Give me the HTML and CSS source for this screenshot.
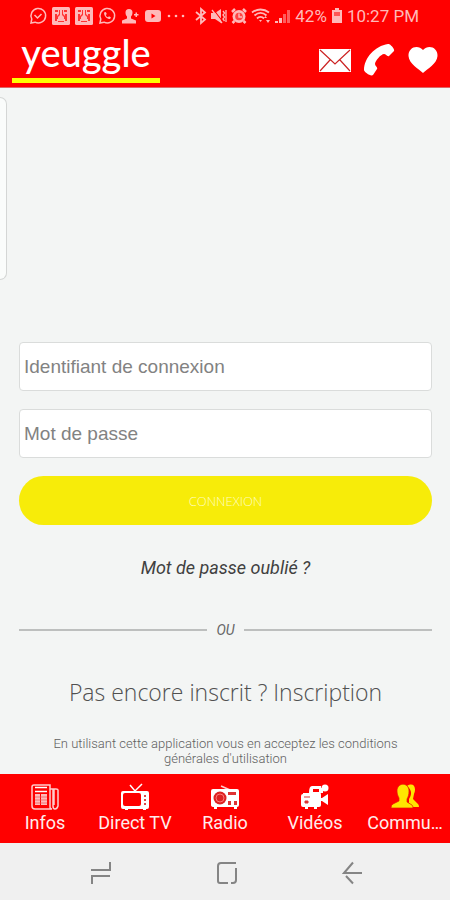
FILE: index.html
```html
<!DOCTYPE html>
<html lang="fr">
<head>
<meta charset="utf-8">
<meta name="viewport" content="width=device-width, initial-scale=1">
<title>Yeuggle</title>
<link rel="stylesheet" href="styles.css">
</head>
<body>
<div class="app">
  <header class="header">
    <div class="status">
      <div class="notices">
        <svg width="18" height="18" viewBox="0 0 18 18" fill="none" stroke="currentColor" stroke-width="1.5"><path d="M2 16l.8-4A7.3 7.3 0 1 1 6 15.200z"/><path d="M5.500 8l3 3 4-4"/></svg>
        <svg width="18" height="18" viewBox="0 0 18 18"><rect width="18" height="18" rx="1.500" fill="currentColor"/><path d="M3 3h3v2H3zM12 3h3v2h-3zM3 7h2v7H3zM13 7h2v7h-2zM7 3h1v5L6 10v2H5V9l2-2zM11 3h-1v5l2 2v2h1V9l-2-2zM6 14h6v1H6z" fill="#f33"/></svg>
        <svg width="18" height="18" viewBox="0 0 18 18"><rect width="18" height="18" rx="1.500" fill="currentColor"/><path d="M3 3h3v2H3zM12 3h3v2h-3zM3 7h2v7H3zM13 7h2v7h-2zM7 3h1v5L6 10v2H5V9l2-2zM11 3h-1v5l2 2v2h1V9l-2-2zM6 14h6v1H6z" fill="#f33"/></svg>
        <svg width="18" height="18" viewBox="0 0 18 18" fill="none" stroke="currentColor" stroke-width="1.500"><path d="M2 16l.8-4A7.300 7.300 0 1 1 6 15.200z"/><path d="M6 5.500c0 4 3 6.500 6 6.500l1-1.500-2-1.200-1 1C9 10 8 9 7.800 8l1-1-1-2z" fill="currentColor" stroke="none"/></svg>
        <svg width="18" height="18" viewBox="0 0 18 18" fill="currentColor"><path d="M4.500 5.500a3.500 3.500 0 0 1 7 0c0 2-.7 3-1.500 4v2l5 2v3H1v-3l5-2v-2c-.8-1-1.500-2-1.500-4zM13 7h1.500V5.500H16V7h1.500v1.500H16V10h-1.500V8.500H13z"/></svg>
        <svg width="18" height="18" viewBox="0 0 18 18"><rect x="1" y="3" width="16" height="12" rx="3" fill="currentColor"/><path d="M7.500 6.500v5l4-2.500z" fill="red"/></svg>
        <svg width="18" height="18" viewBox="0 0 18 18" fill="currentColor"><circle cx="2" cy="9" r="1.300"/><circle cx="9" cy="9" r="1.300"/><circle cx="16" cy="9" r="1.300"/></svg>
      </div>
      <div class="device">
        <svg width="12" height="18" viewBox="0 0 12 18" fill="none" stroke="currentColor" stroke-width="1.800"><path d="M1 5l9 7.500L6 16V2l4 3.500L1 13"/></svg>
        <svg width="16" height="18" viewBox="0 0 16 18" fill="currentColor"><path d="M0 6h4l6-4v14l-6-4H0z"/><path d="M2 2l10 13" stroke="red" stroke-width="1.200"/><path d="M1 3l10 13M12 4l1.500 2-1.500 2 1.500 2-1.500 2 1.500 2M15 3v12" fill="none" stroke="currentColor" stroke-width="1.300"/></svg>
        <svg width="16" height="18" viewBox="0 0 16 18"><circle cx="8" cy="9.500" r="6.500" fill="currentColor"/><path d="M1 5l3-3M15 5l-3-3M3.500 14l-2 2M12.500 14l2 2" stroke="currentColor" stroke-width="2.500"/><circle cx="8" cy="9.500" r="3.800" fill="#f44"/><path d="M8 6.500v3.500h3" stroke="currentColor" stroke-width="1.400" fill="none"/></svg>
        <svg width="20" height="18" viewBox="0 0 20 18" fill="none" stroke="currentColor" stroke-width="1.800"><path d="M1 5.500c5-4 12-4 17 0M3.500 8.500c4-3.500 8-3.500 12 0M6 11.500c2-2 5-2 7 0"/><path d="M8 13h3l-1.500 2zM13 11l1.500-2 1.500 2zM15 13h4l-2 3z" fill="currentColor" stroke="none"/></svg>
        <svg width="16" height="18" viewBox="0 0 16 18" fill="currentColor"><path d="M0 14h3v2H0zM4 11h3v5H4z"/><path d="M8 7h3v9H8zM12 3h3v13h-3z" opacity=".5"/></svg>
        <span>42%</span>
        <svg width="12" height="18" viewBox="0 0 12 18"><path d="M4 1h4v2h3v13H1V3h3z" fill="currentColor"/><path d="M3 5h6v4H3z" fill="#f55"/></svg>
        <span>10:27 PM</span>
      </div>
    </div>
    <div class="appbar">
      <a class="logo" href="#">yeuggle</a>
      <nav class="actions" aria-label="Contact">
        <a href="#" aria-label="Messages"><svg width="34" height="32" viewBox="0 0 34 32"><path d="M1 5h32v23H1z" fill="#fff"/><path d="M2 6l15 14L32 6M2 27l10-11M32 27L22 16" fill="none" stroke="#c22" stroke-width="1.200"/></svg></a>
        <a href="#" aria-label="Appeler"><svg width="34" height="32" viewBox="0 0 34 32" fill="#fff"><path d="M25 0c2-.5 7 5 6 7l-5 5c-2 1-3-2-5-2-3 0-9 7-9 10 0 2 3 3 2 5l-4 6c-2 2-9-3-9-5C1 14 12 2 25 0z"/></svg></a>
        <a href="#" aria-label="Favoris"><svg width="30" height="32" viewBox="0 0 30 32" fill="#fff"><path d="M15 29C11 25 1 20 .5 12 0 3 10 0 15 6c5-6 15-3 14.500 6C29 20 19 25 15 29z"/></svg></a>
      </nav>
    </div>
  </header>

  <main class="main">
    <div class="drawer"></div>
    <form class="login">
      <input class="field" type="text" aria-label="Identifiant de connexion" placeholder="Identifiant de connexion">
      <input class="field" type="password" aria-label="Mot de passe" placeholder="Mot de passe">
      <button class="submit" type="button">CONNEXION</button>
    </form>
    <a class="forgot" href="#">Mot de passe oublié ?</a>
    <div class="divider"><span>OU</span></div>
    <a class="signup" href="#">Pas encore inscrit ? Inscription</a>
    <p class="terms">En utilisant cette application vous en acceptez les conditions générales d'utilisation</p>
  </main>

  <nav class="tabs" aria-label="Rubriques">
    <a class="tab" href="#"><svg width="30" height="28" viewBox="0 0 30 28" fill="none" stroke="#fcc" stroke-width="1.500"><path d="M2 4q0-2 2-2h16v22q0 2 2 2H5q-3 0-3-3zM20 6h3v17q0 3 2 3t3-3V7q0-1-2-1h-2v16"/><path d="M5 4.500h12M5 8.500h12" stroke="#fff"/><path d="M5 11h5v11H5zM11 11h6v11h-6z" fill="#fbb" stroke="none"/><path d="M5 14h12M5 17h12M5 20h12" stroke="#e55" stroke-width=".7"/></svg><span>Infos</span></a>
    <a class="tab" href="#"><svg width="30" height="28" viewBox="0 0 30 28"><path d="M10 2l5 6 7-7" fill="none" stroke="#fff" stroke-width="1.500"/><path d="M3 8h24q2 0 2 2v14q0 2-2 2h-1v1h-3v-1H8v1H5v-1H3q-2 0-2-2V10q0-2 2-2z" fill="#fff"/><path d="M5 10h14q2 0 2 2v9q0 2-2 2H5q-2 0-2-2v-9q0-2 2-2z" fill="red"/><path d="M24 12h2v2h-2zM24 16h2v2h-2zM24 20h2v2h-2z" fill="#d44"/></svg><span>Direct TV</span></a>
    <a class="tab" href="#"><svg width="30" height="28" viewBox="0 0 30 28"><path d="M11 3l9 4" stroke="#fcc" stroke-width="1.400"/><path d="M3 6h24q2 0 2 2v14q0 2-2 2v2h-3v-2H7v2H4v-2q-3 0-3-2V8q0-2 2-2z" fill="#fff"/><circle cx="10" cy="15" r="6.500" fill="#d22"/><circle cx="10" cy="15" r="4" fill="none" stroke="#f77"/><path d="M18 9h8v3h-8zM18 18h3v4h-3zM24 18h3v4h-3z" fill="#d33"/></svg><span>Radio</span></a>
    <a class="tab" href="#"><svg width="30" height="28" viewBox="0 0 30 28"><path d="M3 10h6q0-7 3-7h9v3h-8v3h6q2 0 2 3v3h1l6-4v11l-6-4h-1v4q0 2-2 2h-2v2h-3v-2H8v2H5v-2H3q-2 0-2-2v-9q0-2 2-2z" fill="#fff"/><circle cx="25" cy="5" r="3.500" fill="#fff"/><path d="M19 5h4v5h-4z" fill="#fff"/><path d="M4 14h6M5 18h3v2H5z" fill="#d33" stroke="#d33"/></svg><span>Vidéos</span></a>
    <a class="tab active" href="#"><svg width="30" height="28" viewBox="0 0 30 28" fill="#ffe600"><path d="M17 3c6-4 10 1 7 8l-1 5 5 5q1 1 1 3h-6l-4-4v-4c3-5 3-9-2-13z"/><path d="M7 8c0-9 12-9 12 0 0 4-1 6-2 8v3l5 3q1 1 1 3H1q0-3 2-4l6-3v-3C8 13 7 11 7 8z" stroke="#e51b00" stroke-width=".7"/></svg><span>Commu…</span></a>
  </nav>

  <div class="sysnav">
    <button type="button" aria-label="Applications récentes"><svg width="22" height="24" viewBox="0 0 22 24"><path d="M20 1v8H1M2 23v-8h18"/></svg></button>
    <button type="button" aria-label="Accueil"><svg width="22" height="24" viewBox="0 0 22 24"><path d="M20 7v12q0 3-3 3h-2M12 22H4q-2 0-2-2V5q0-3 3-3h15"/></svg></button>
    <button type="button" aria-label="Retour"><svg width="22" height="24" viewBox="0 0 22 24"><path d="M11 1.500L2 12h18M4 15l7 7.500"/></svg></button>
  </div>
</div>
</body>
</html>
```
FILE: styles.css
```css
* {
  box-sizing: border-box;
}

body {
  margin: 0;
  background: #f3f5f4;
  color: #505050;
  font-family: Roboto, "Liberation Sans", sans-serif;
}

a {
  color: inherit;
  text-decoration: none;
}

svg {
  display: block;
  flex: none;
}

.app {
  display: flex;
  flex-direction: column;
  min-height: 100vh;
}

.header {
  background: #f00;
  border-bottom: 1px solid #d66;
}

.status {
  display: flex;
  justify-content: space-between;
  align-items: center;
  height: 32px;
  padding: 0 31px 0 29px;
  color: #ffb9b9;
  font-size: 17px;
}

.notices {
  display: flex;
  align-items: center;
  gap: 5px;
}

.device {
  display: flex;
  align-items: center;
  gap: 4px;
  white-space: nowrap;
}

.appbar {
  display: flex;
  justify-content: space-between;
  align-items: center;
  height: 55px;
  padding: 0 12px;
}

.logo {
  width: 148px;
  height: 46px;
  border-bottom: 5px solid #ff0;
  color: #fff;
  font: 500 38px/30px Lato, sans-serif;
  text-align: center;
}

.actions {
  display: flex;
  gap: 11px;
}

.main {
  position: relative;
  display: flex;
  flex: 1;
  flex-direction: column;
  justify-content: flex-end;
  align-items: center;
  padding: 0 18px 8px 19px;
}

.drawer {
  position: absolute;
  top: 9px;
  left: 0;
  width: 7px;
  height: 183px;
  border: 1px solid #d4d6d5;
  border-left: 0;
  border-radius: 0 7px 7px 0;
  background: #fafcfb;
}

.login {
  display: flex;
  flex-direction: column;
  gap: 18px;
  width: 100%;
}

.field {
  width: 100%;
  height: 49px;
  padding: 0 4px;
  border: 1px solid #dadcdb;
  border-radius: 4px;
  background: #fff;
  color: #444;
  font: 19px "Liberation Sans", sans-serif;
}

.field::placeholder {
  color: #828282;
}

.submit {
  height: 49px;
  border: 0;
  border-radius: 25px;
  background: #f7ec09;
  color: #fffcc0;
  font: 300 13px "Open Sans", sans-serif;
}

.forgot {
  margin-top: 31px;
  color: #404040;
  font-size: 18px;
  font-style: italic;
  line-height: 24px;
}

.divider {
  display: flex;
  align-items: center;
  gap: 9px;
  width: 100%;
  margin-top: 40px;
  color: #666;
  font-size: 14px;
  font-style: italic;
  line-height: 20px;
}

.divider::before,
.divider::after {
  content: "";
  flex: 1;
  height: 2px;
  background: #bdbfbe;
}

.signup {
  margin-top: 36px;
  color: #505050;
  font: 300 23px/32px "Open Sans", sans-serif;
}

.terms {
  width: 370px;
  max-width: 100%;
  margin: 28px 0 0;
  color: #606060;
  font-size: 13px;
  font-weight: 300;
  line-height: 15px;
  text-align: center;
}

.tabs {
  display: grid;
  grid-template-columns: repeat(5, 1fr);
  height: 69px;
  background: #f00;
  color: #ffecec;
}

.tab {
  display: flex;
  flex-direction: column;
  align-items: center;
  min-width: 0;
  padding: 9px 4px 0;
  font-size: 18px;
  line-height: 24px;
  white-space: nowrap;
}

.sysnav {
  display: flex;
  justify-content: center;
  align-items: center;
  gap: 104px;
  height: 57px;
  padding: 2px 0 0 4px;
  background: #f0f0f0;
}

.sysnav button {
  padding: 0;
  border: 0;
  background: none;
}

.sysnav svg {
  fill: none;
  stroke: #858585;
  stroke-width: 2;
}
```
